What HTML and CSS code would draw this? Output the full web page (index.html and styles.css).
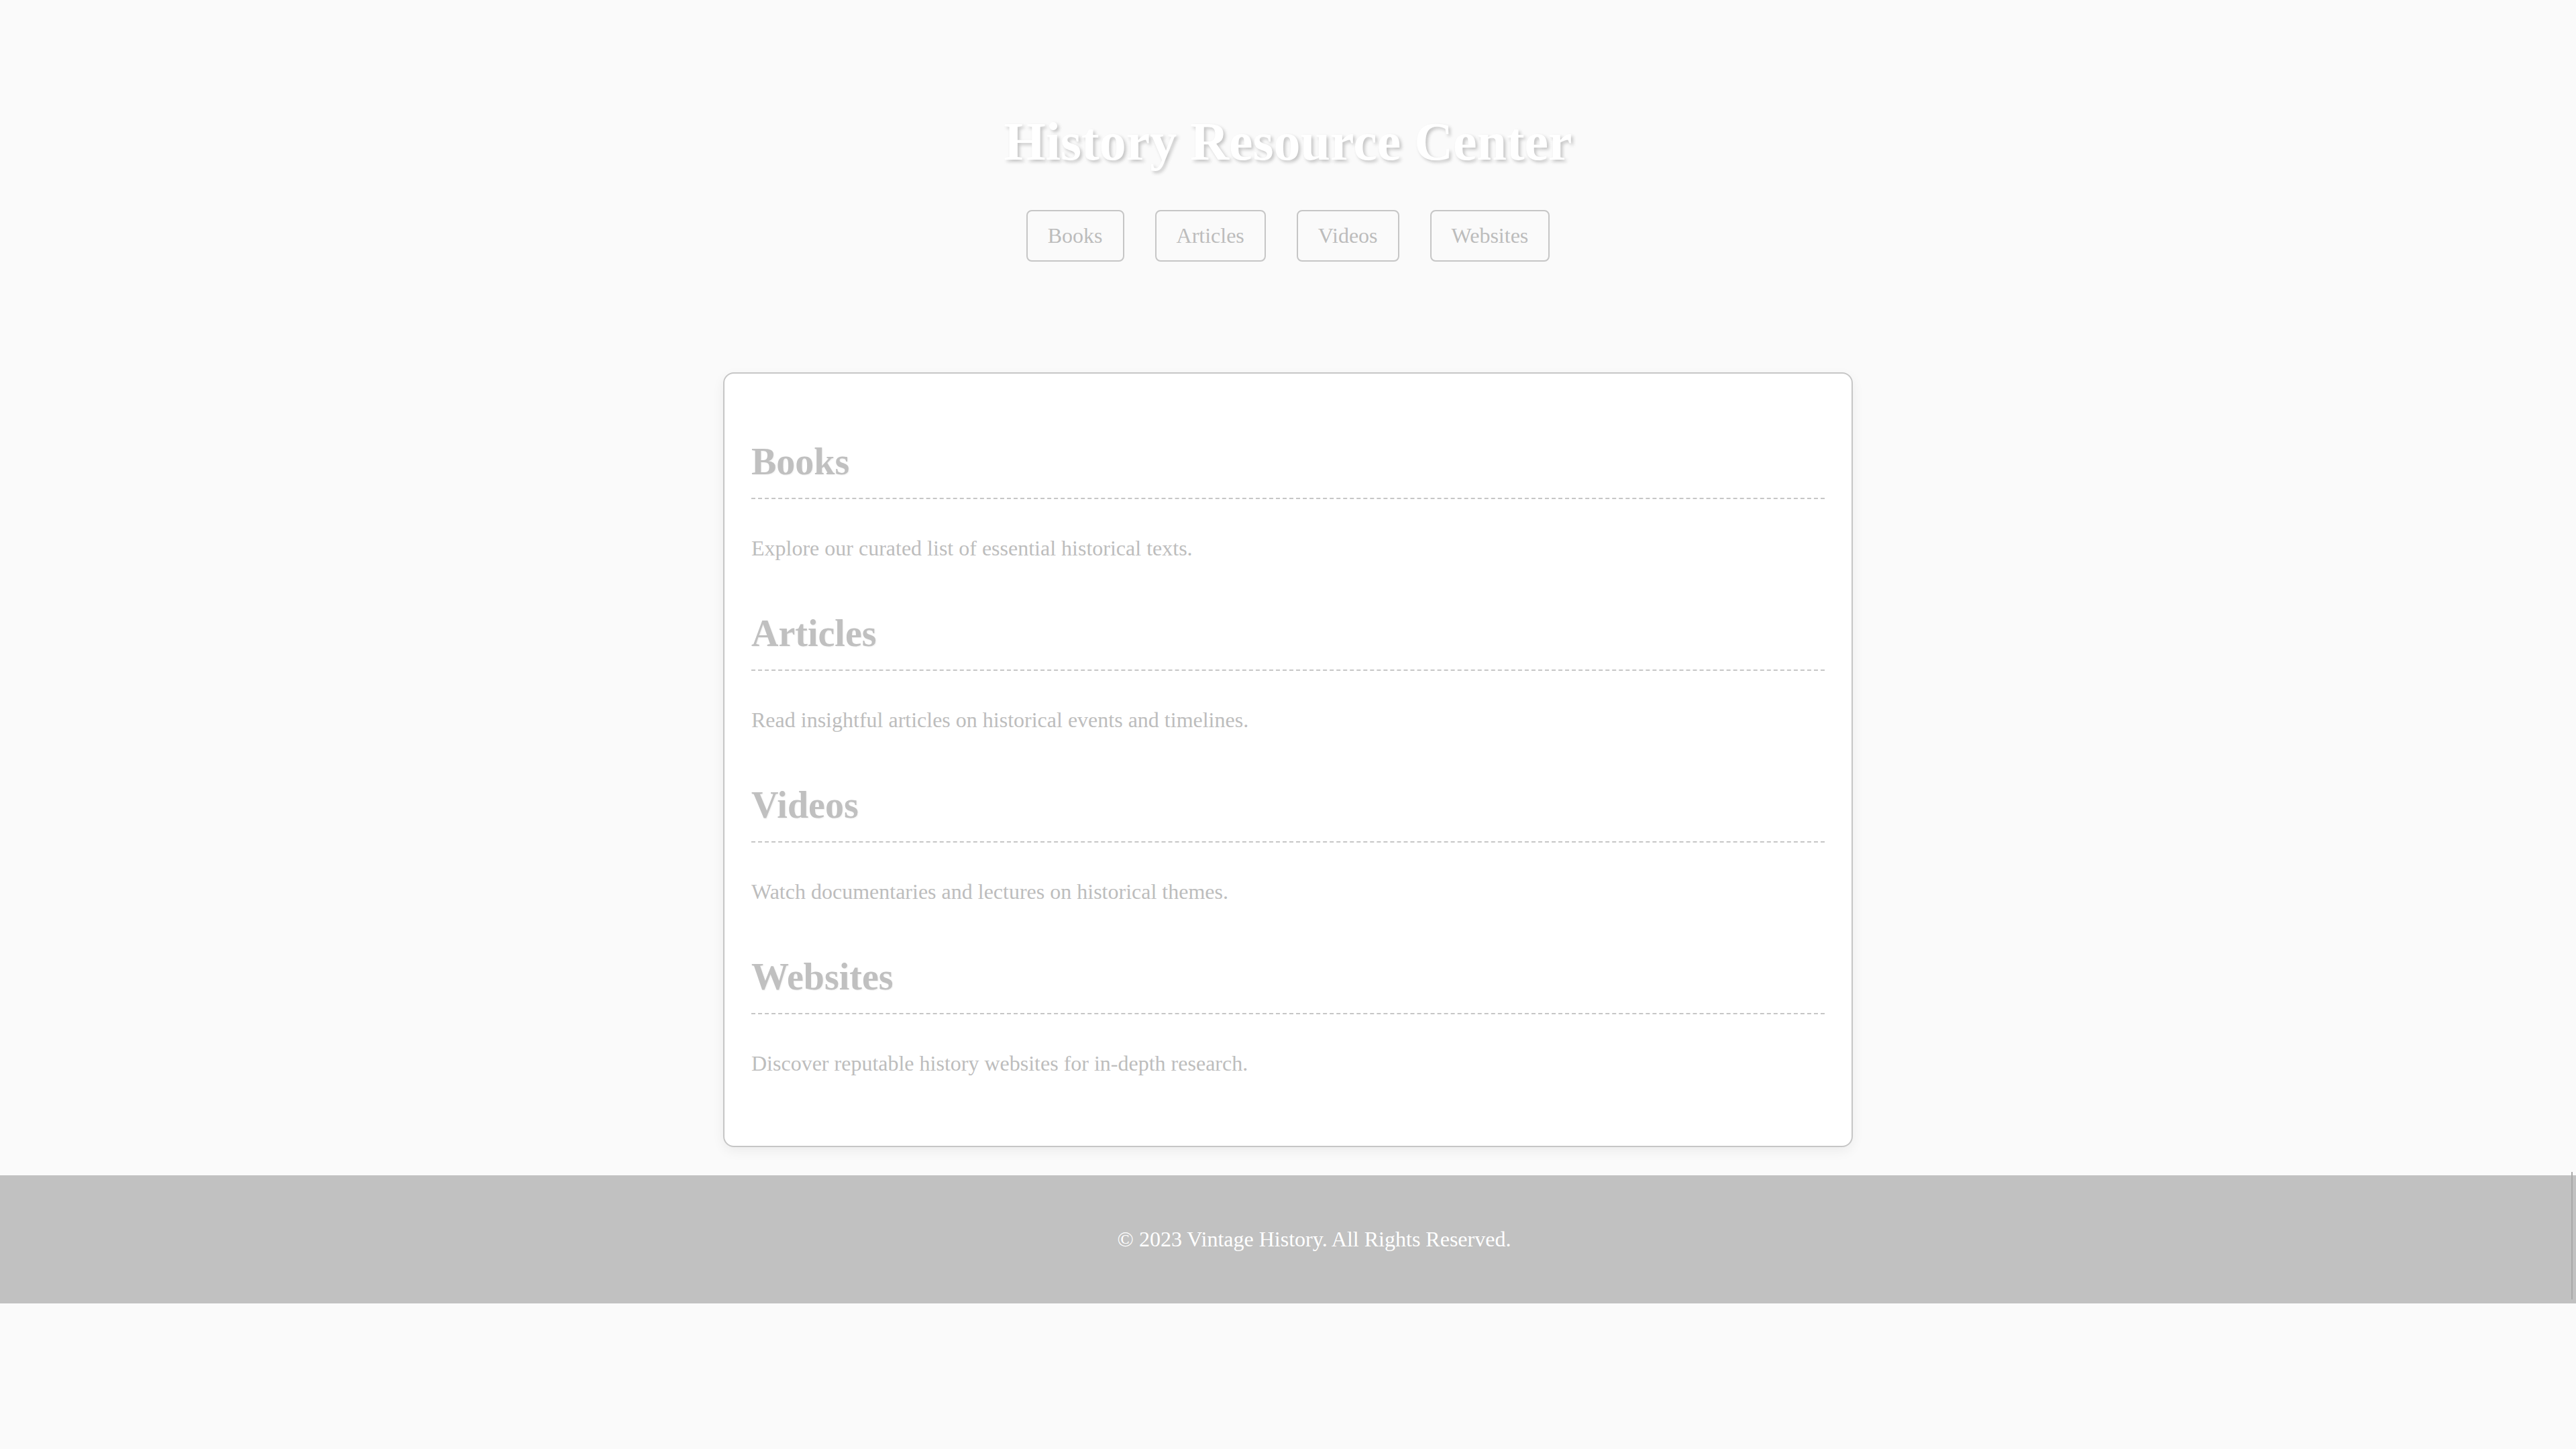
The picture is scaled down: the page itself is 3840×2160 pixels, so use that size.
FILE: index.html
```html
<!DOCTYPE html>
<html lang="en">
<head>
<meta charset="utf-8">
<title>History Resource Center</title>
<link rel="stylesheet" href="styles.css">
</head>
<body>
<header class="site-header">
  <h1 class="site-title">History Resource Center</h1>
  <nav class="site-nav">
    <a class="nav-btn" href="#books">Books</a>
    <a class="nav-btn" href="#articles">Articles</a>
    <a class="nav-btn" href="#videos">Videos</a>
    <a class="nav-btn" href="#websites">Websites</a>
  </nav>
</header>
<main class="card">
  <section class="resource" id="books">
    <h2 class="resource-title">Books</h2>
    <p class="resource-text">Explore our curated list of essential historical texts.</p>
  </section>
  <section class="resource" id="articles">
    <h2 class="resource-title">Articles</h2>
    <p class="resource-text">Read insightful articles on historical events and timelines.</p>
  </section>
  <section class="resource" id="videos">
    <h2 class="resource-title">Videos</h2>
    <p class="resource-text">Watch documentaries and lectures on historical themes.</p>
  </section>
  <section class="resource" id="websites">
    <h2 class="resource-title">Websites</h2>
    <p class="resource-text">Discover reputable history websites for in-depth research.</p>
  </section>
</main>
<footer class="site-footer">
  <p class="footer-text">&copy; 2023 Vintage History. All Rights Reserved.</p>
</footer>
</body>
</html>
```

FILE: styles.css
```css
html, body {
  margin: 0;
  padding: 0;
}

body {
  background: #fafafa;
  font-family: "Liberation Serif", "Times New Roman", serif;
  font-size: 32px;
  color: #bdbdbd;
  overflow-x: hidden;
}

.site-header {
  padding-top: 166px;
  text-align: center;
}

.site-title {
  margin: 0;
  font-size: 80px;
  font-weight: bold;
  line-height: normal;
  color: #ffffff;
  text-shadow: 3px 3px 5px rgba(0, 0, 0, 0.22);
}

.site-nav {
  margin-top: 56px;
  display: flex;
  justify-content: center;
  gap: 46px;
}

.nav-btn {
  display: block;
  padding: 18px 30px;
  border: 2px solid #c6c6c6;
  border-radius: 8px;
  color: #bcbcbc;
  text-decoration: none;
  line-height: normal;
}

.card {
  box-sizing: content-box;
  width: 1600px;
  margin: 165px auto 0;
  padding: 99px 40px 104px;
  background: #ffffff;
  border: 2px solid #c6c6c6;
  border-radius: 16px;
  box-shadow: 0 6px 18px rgba(0, 0, 0, 0.06);
  display: flex;
  flex-direction: column;
  gap: 76px;
}

.resource {
  display: flex;
  flex-direction: column;
}

.resource-title {
  margin: 0 0 55px;
  padding-bottom: 22px;
  border-bottom: 2px dashed #c6c6c6;
  font-size: 56px;
  font-weight: bold;
  line-height: normal;
  color: #c0c0c0;
  text-shadow: 1px 1px 2px rgba(0, 0, 0, 0.06);
}

.resource-text {
  margin: 0;
  line-height: normal;
  color: #bdbdbd;
}

.site-footer {
  position: relative;
  margin-top: 42px;
  padding: 77px 0 77px 78px;
  background: #c1c1c1;
  text-align: center;
}

.site-footer::after {
  content: "";
  position: absolute;
  right: 5px;
  top: -5px;
  bottom: 6px;
  width: 2px;
  background: #a9a9a9;
}

.footer-text {
  margin: 0;
  line-height: normal;
  color: #ffffff;
}
```
